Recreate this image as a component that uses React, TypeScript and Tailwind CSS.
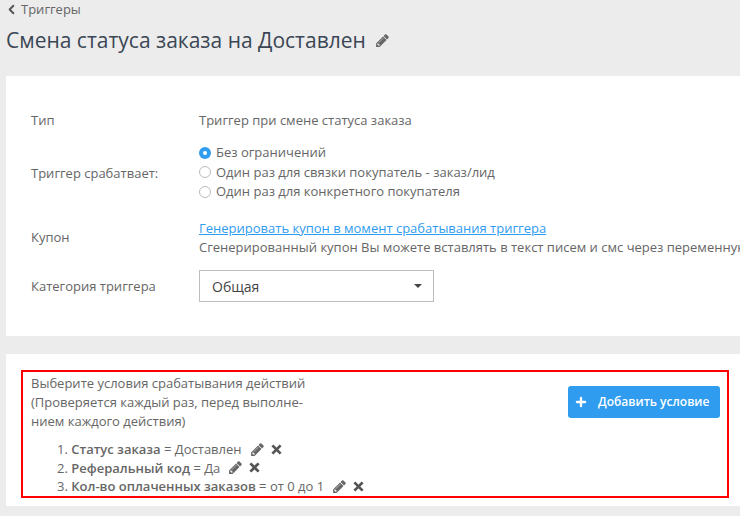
import React from 'react';
import { ChevronLeft, Plus } from 'lucide-react';

const Pencil = ({ className }: { className: string }) => (
  <svg viewBox="0 0 1792 1792" className={className} fill="currentColor">
    <path d="M491 1536l91-91-235-235-91 91v107h128v128h107zm523-928q0-22-22-22-10 0-17 7l-542 542q-7 7-7 17 0 22 22 22 10 0 17-7l542-542q7-7 7-17zm-54-192l416 416-832 832H128v-416zm683 96q0 53-37 90l-166 166-416-416 166-165q36-38 90-38 53 0 91 38l235 234q37 39 37 91z" />
  </svg>
);

const Cross = ({ className }: { className: string }) => (
  <svg viewBox="0 0 12 12" className={className} stroke="currentColor" strokeWidth="3" fill="none">
    <path d="M1.5 1.5l9 9M10.5 1.5l-9 9" />
  </svg>
);

const conditions = [
  { name: 'Статус заказа', value: ' = Доставлен' },
  { name: 'Реферальный код', value: ' = Да' },
  { name: 'Кол-во оплаченных заказов', value: ' = от 0 до 1' },
];

const radios = [
  { label: 'Без ограничений', checked: true },
  { label: 'Один раз для связки покупатель - заказ/лид', checked: false },
  { label: 'Один раз для конкретного покупателя', checked: false },
];

const App = () => {
  return (
    <div className="w-[740px] h-[516px] overflow-hidden bg-[#ececec] font-['Open_Sans',sans-serif] text-[13px] text-[#666666]">
      <div className="flex items-center h-[18px] pl-[4px] text-[13px] leading-[18px]">
        <ChevronLeft size={15} strokeWidth={3} className="text-[#555555] mr-[2px]" />
        <span>Триггеры</span>
      </div>
      <div className="flex items-center h-[30px] mt-[7px] pl-[6px]">
        <h1 className="text-[21px] leading-[30px] font-normal text-[#3a4654] whitespace-nowrap">Смена статуса заказа на Доставлен</h1>
        <Pencil className="w-[15px] h-[15px] ml-[9px] text-[#666666]" />
      </div>

      <div className="ml-[6px] mt-[21px] w-[760px] h-[260px] bg-white pt-[35px] pl-[25px]">
        <div className="flex items-center h-[20px]">
          <div className="w-[168px]">Тип</div>
          <div>Триггер при смене статуса заказа</div>
        </div>
        <div className="flex items-center mt-[12px]">
          <div className="w-[168px] pt-[2px]">Триггер срабатвает:</div>
          <div className="flex flex-col">
            {radios.map((radio) => (
              <div key={radio.label} className="flex items-center h-[19.5px]">
                {radio.checked ? (
                  <span className="flex items-center justify-center w-[12px] h-[12px] rounded-full bg-[#2f9cf0] mr-[5px]">
                    <span className="w-[4px] h-[4px] rounded-full bg-white" />
                  </span>
                ) : (
                  <span className="w-[12px] h-[12px] rounded-full border border-[#bbbbbb] bg-white mr-[5px]" />
                )}
                <span>{radio.label}</span>
              </div>
            ))}
          </div>
        </div>
        <div className="flex items-center mt-[17px]">
          <div className="w-[168px]">Купон</div>
          <div className="whitespace-nowrap leading-[19px]">
            <div className="text-[#2f9cf0] underline">Генерировать купон в момент срабатывания триггера</div>
            <div>Сгенерированный купон Вы можете вставлять в текст писем и смс через переменную</div>
          </div>
        </div>
        <div className="flex items-center mt-[13px]">
          <div className="w-[168px] pt-[2px]">Категория триггера</div>
          <div className="flex items-center justify-between w-[235px] h-[32px] border border-[#bdbdbd] pl-[12px] pr-[11px] text-[14px] text-[#444444]">
            <span className="pt-[1px]">Общая</span>
            <span className="w-0 h-0 border-x-[4px] border-x-transparent border-t-[4px] border-t-[#444444]" />
          </div>
        </div>
      </div>

      <div className="ml-[6px] mt-[18px] w-[760px] h-[152px] bg-white pt-[16px] pl-[15px]">
        <div className="w-[708px] h-[128px] border-2 border-[#ff0000] pt-[2px] pl-[8px] pr-[7px]">
          <div className="flex justify-between">
            <div className="w-[290px] leading-[19px]">
              Выберите условия срабатывания действий
              <br />
              (Проверяется каждый раз, перед выполне-
              <br />
              нием каждого действия)
            </div>
            <button className="flex items-center w-[152px] h-[32px] mt-[12px] rounded-[3px] bg-[#2f9cf0] pl-[6px] text-white font-semibold text-[12px]">
              <Plus size={14} strokeWidth={4} className="mr-[10px]" />
              Добавить условие
            </button>
          </div>
          <ol className="mt-[9px] pl-[26px] leading-[18.5px]">
            {conditions.map((condition, index) => (
              <li key={condition.name} className="flex items-center h-[18.5px] whitespace-nowrap">
                <span>{index + 1}.&nbsp;</span>
                <b className="font-semibold">{condition.name}</b>
                <span className="whitespace-pre">{condition.value}</span>
                <Pencil className="w-[15px] h-[15px] ml-[8px] text-[#666666]" />
                <Cross className="w-[11px] h-[11px] ml-[6px] text-[#555555]" />
              </li>
            ))}
          </ol>
        </div>
      </div>
    </div>
  );
};

export default App;
